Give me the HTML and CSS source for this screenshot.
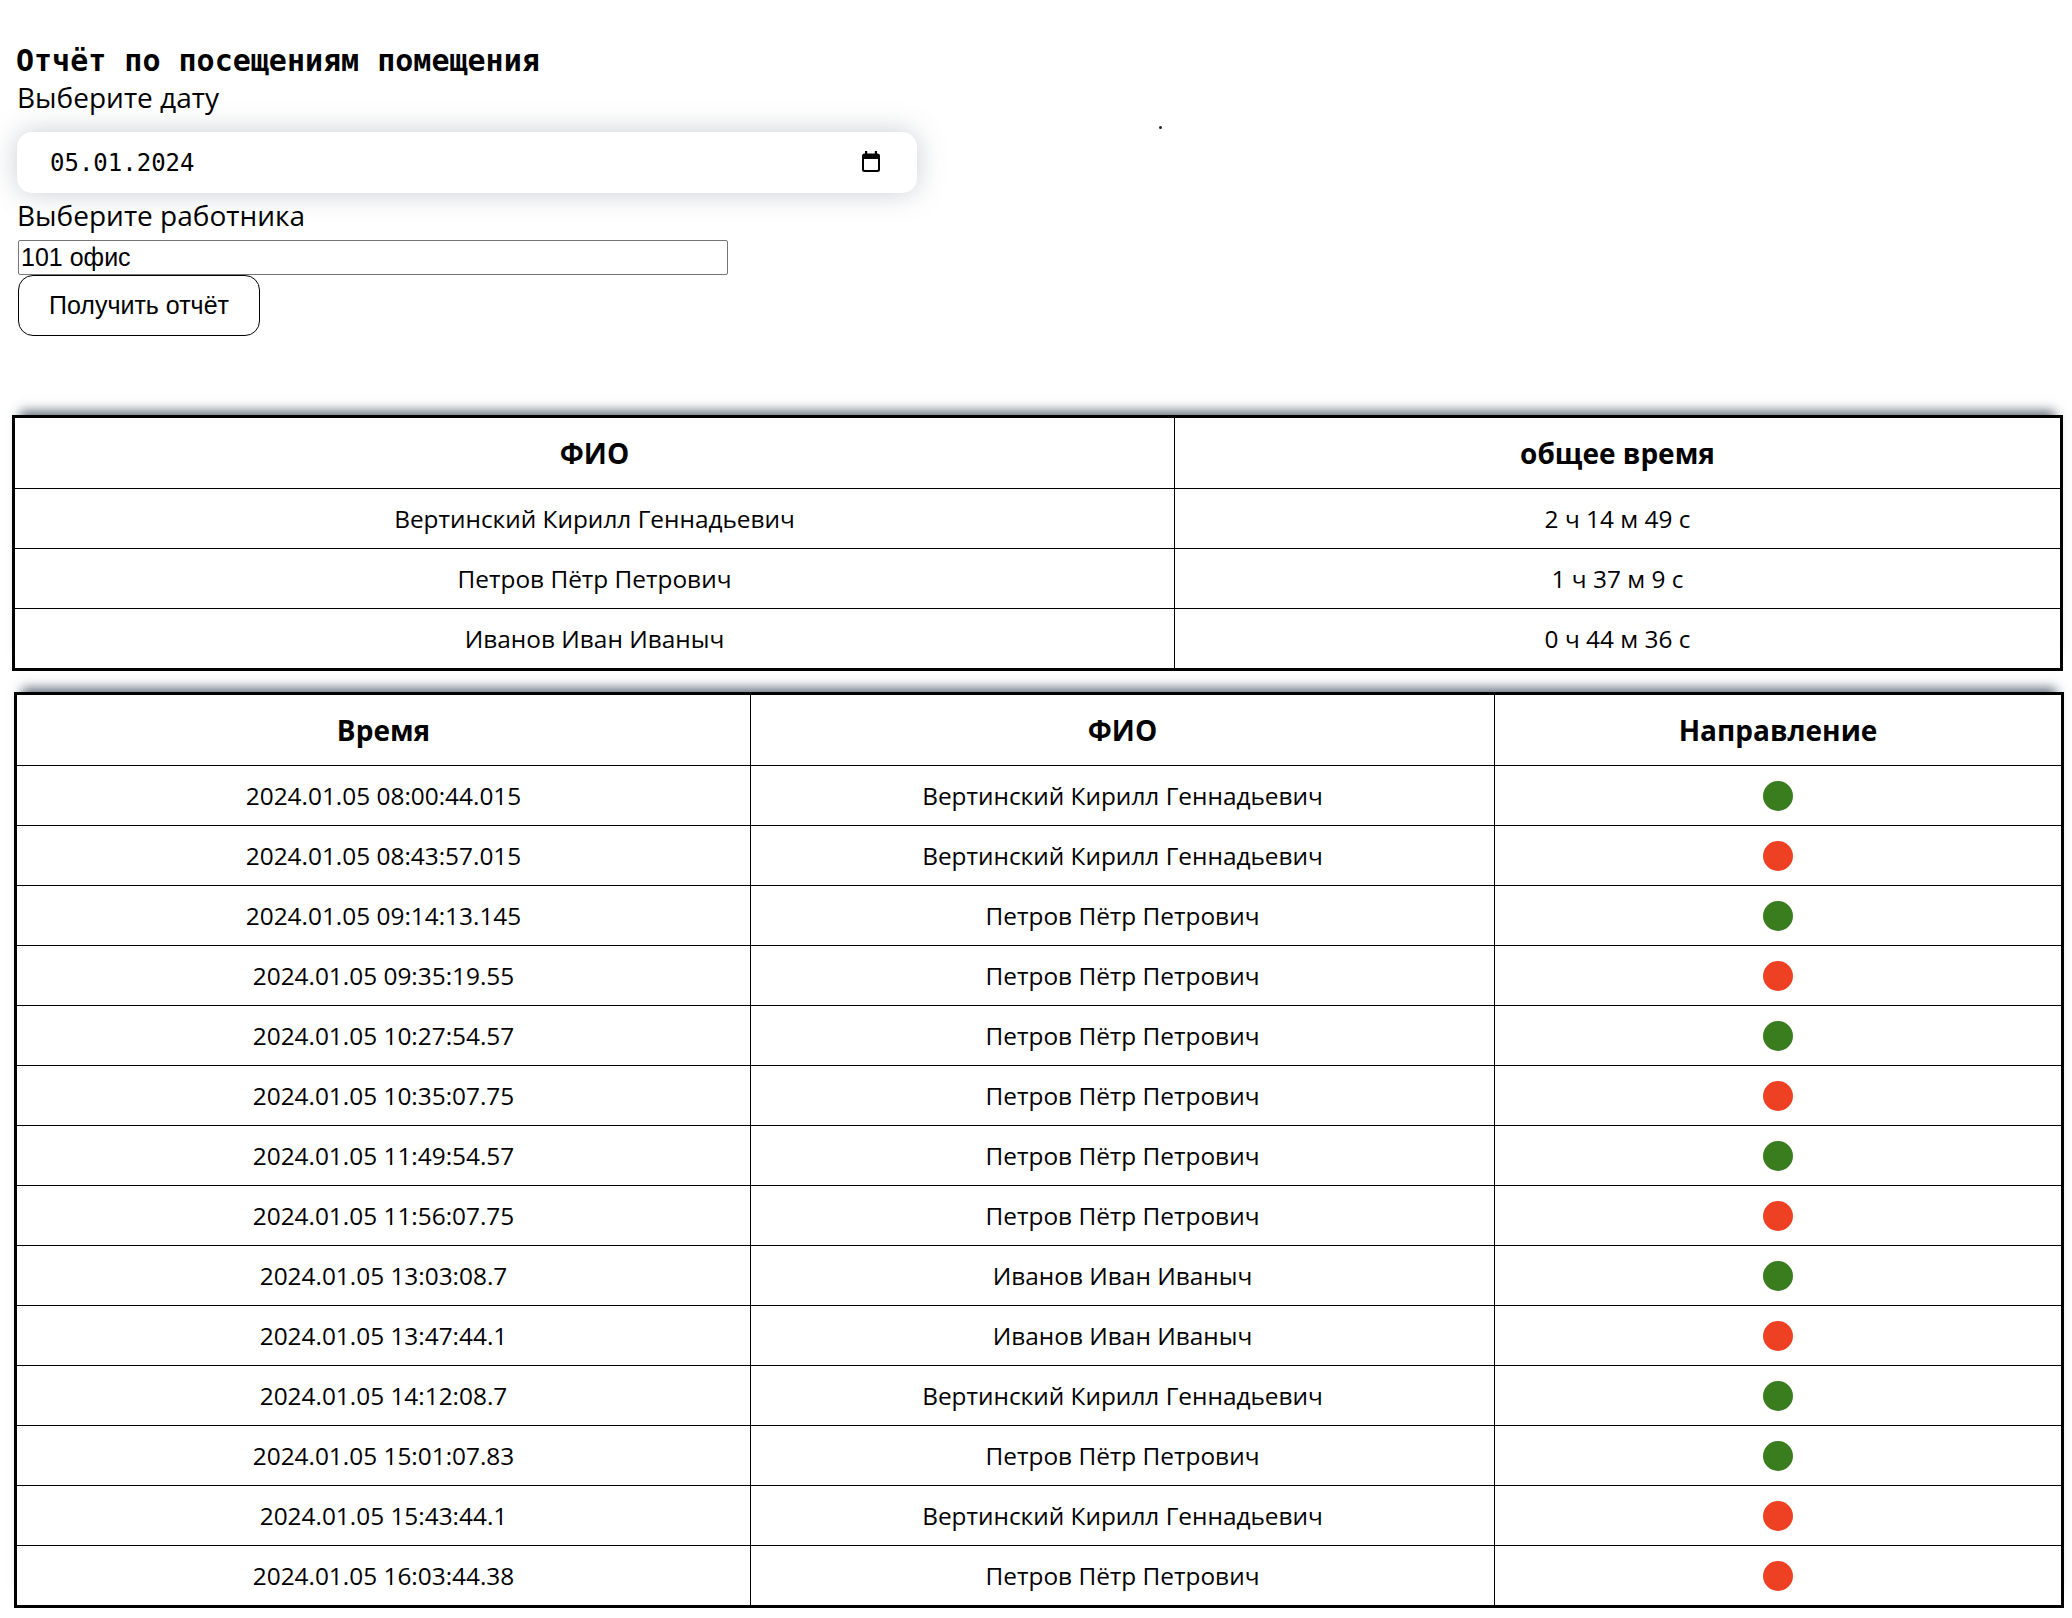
FILE: index.html
```html
<!DOCTYPE html>
<html lang="ru">
<head>
<meta charset="utf-8">
<title>Отчёт по посещениям помещения</title>
<link rel="stylesheet" href="styles.css">
</head>
<body>
<main class="page">
  <section class="form">
    <h1 class="title">Отчёт по посещениям помещения</h1>
    <label class="label label-date">Выберите дату</label>
    <div class="date-field">
      <span class="date-value">05.01.2024</span>
      <svg class="cal-icon" width="18" height="21" viewBox="0 0 18 21" aria-hidden="true">
        <rect x="3" y="0" width="2.2" height="4" fill="#000"/>
        <rect x="12.8" y="0" width="2.2" height="4" fill="#000"/>
        <path fill="#000" fill-rule="evenodd" d="M2.5 2.5h13a2.5 2.5 0 0 1 2.5 2.5v13.5a2.5 2.5 0 0 1-2.5 2.5h-13A2.5 2.5 0 0 1 0 18.5V5a2.5 2.5 0 0 1 2.5-2.5zM2 8v10.3c0 .4.3.7.7.7h12.6c.4 0 .7-.3.7-.7V8z"/>
      </svg>
    </div>
    <label class="label label-worker">Выберите работника</label>
    <input class="worker-input" type="text" value="101 офис">
    <button class="submit" type="button">Получить отчёт</button>
  </section>
  <span class="stray-dot"></span>

  <table class="report summary">
    <thead>
      <tr><th class="s-name">ФИО</th><th class="s-total">общее время</th></tr>
    </thead>
    <tbody>
      <tr><td>Вертинский Кирилл Геннадьевич</td><td>2 ч 14 м 49 с</td></tr>
      <tr><td>Петров Пётр Петрович</td><td>1 ч 37 м 9 с</td></tr>
      <tr><td>Иванов Иван Иваныч</td><td>0 ч 44 м 36 с</td></tr>
    </tbody>
  </table>

  <table class="report log">
    <thead>
      <tr><th class="l-time">Время</th><th class="l-name">ФИО</th><th class="l-dir">Направление</th></tr>
    </thead>
    <tbody>
      <tr><td>2024.01.05 08:00:44.015</td><td>Вертинский Кирилл Геннадьевич</td><td><span class="dot in"></span></td></tr>
      <tr><td>2024.01.05 08:43:57.015</td><td>Вертинский Кирилл Геннадьевич</td><td><span class="dot out"></span></td></tr>
      <tr><td>2024.01.05 09:14:13.145</td><td>Петров Пётр Петрович</td><td><span class="dot in"></span></td></tr>
      <tr><td>2024.01.05 09:35:19.55</td><td>Петров Пётр Петрович</td><td><span class="dot out"></span></td></tr>
      <tr><td>2024.01.05 10:27:54.57</td><td>Петров Пётр Петрович</td><td><span class="dot in"></span></td></tr>
      <tr><td>2024.01.05 10:35:07.75</td><td>Петров Пётр Петрович</td><td><span class="dot out"></span></td></tr>
      <tr><td>2024.01.05 11:49:54.57</td><td>Петров Пётр Петрович</td><td><span class="dot in"></span></td></tr>
      <tr><td>2024.01.05 11:56:07.75</td><td>Петров Пётр Петрович</td><td><span class="dot out"></span></td></tr>
      <tr><td>2024.01.05 13:03:08.7</td><td>Иванов Иван Иваныч</td><td><span class="dot in"></span></td></tr>
      <tr><td>2024.01.05 13:47:44.1</td><td>Иванов Иван Иваныч</td><td><span class="dot out"></span></td></tr>
      <tr><td>2024.01.05 14:12:08.7</td><td>Вертинский Кирилл Геннадьевич</td><td><span class="dot in"></span></td></tr>
      <tr><td>2024.01.05 15:01:07.83</td><td>Петров Пётр Петрович</td><td><span class="dot in"></span></td></tr>
      <tr><td>2024.01.05 15:43:44.1</td><td>Вертинский Кирилл Геннадьевич</td><td><span class="dot out"></span></td></tr>
      <tr><td>2024.01.05 16:03:44.38</td><td>Петров Пётр Петрович</td><td><span class="dot out"></span></td></tr>
    </tbody>
  </table>
</main>
</body>
</html>
```

FILE: styles.css
```css
html, body {
  margin: 0;
  padding: 0;
  background: #ffffff;
  color: #000000;
}

.page {
  position: relative;
  width: 2072px;
  padding-bottom: 10px;
}

.form {
  display: flex;
  flex-direction: column;
  align-items: flex-start;
  padding: 43px 0 0 17px;
}

.title {
  margin: 0 0 0 -1px;
  font-family: "DejaVu Sans Mono", monospace;
  font-weight: bold;
  font-size: 30px;
  line-height: 35px;
}

.label {
  font-family: "Open Sans", "Noto Sans", sans-serif;
  font-size: 28px;
  line-height: 38px;
}

.label-worker {
  margin-top: 3px;
}

.date-field {
  box-sizing: border-box;
  margin-top: 16px;
  width: 900px;
  height: 61px;
  padding: 0 37px 0 33px;
  border-radius: 15px;
  background: #ffffff;
  box-shadow: 0 0 28px rgba(95, 108, 125, 0.34);
  display: flex;
  align-items: center;
  justify-content: space-between;
}

.date-value {
  font-family: "DejaVu Sans Mono", monospace;
  font-size: 24px;
  line-height: 28px;
}

.cal-icon {
  display: block;
  margin-top: -3px;
}

.worker-input {
  box-sizing: border-box;
  margin: 6px 0 0 1px;
  width: 710px;
  height: 35px;
  padding: 0 2px;
  border: 1px solid #767676;
  border-radius: 2px;
  font-family: "Liberation Sans", Arial, sans-serif;
  font-size: 25px;
  color: #000;
  background: #fff;
}

.submit {
  box-sizing: border-box;
  margin-left: 1px;
  width: 242px;
  height: 61px;
  padding: 0;
  border: 1px solid #000;
  border-radius: 15px;
  background: #ffffff;
  font-family: "Liberation Sans", Arial, sans-serif;
  font-size: 25px;
  color: #000;
}

.stray-dot {
  position: absolute;
  left: 1159px;
  top: 126px;
  width: 3px;
  height: 3px;
  border-radius: 50%;
  background: #222;
}

.report {
  border-collapse: separate;
  border-spacing: 0;
  table-layout: fixed;
  border: 3px solid #000;
  background: #fff;
  box-shadow: 0 -12px 11px -8px rgba(45, 60, 78, 0.75);
  font-family: "Open Sans", "Noto Sans", sans-serif;
}

.report th,
.report td {
  padding: 0;
  text-align: center;
  vertical-align: middle;
  border-right: 1px solid #000;
  border-bottom: 1px solid #000;
}

.report th:last-child,
.report td:last-child {
  border-right: none;
}

.report tbody tr:last-child td {
  border-bottom: none;
}

.report th {
  height: 70px;
  font-size: 28px;
  font-weight: bold;
}

.report td {
  height: 59px;
  font-size: 24.4px;
}

.summary {
  margin: 79px 0 0 12px;
  width: 2051px;
}

.s-name { width: 1159px; }
.s-total { width: auto; }

.log {
  margin: 21px 0 0 14px;
  width: 2050px;
}

.l-time { width: 733px; }
.l-name { width: 743px; }
.l-dir { width: auto; }

.dot {
  display: block;
  margin: 0 auto;
  width: 30px;
  height: 30px;
  border-radius: 50%;
}

.dot.in { background: #3a7d1f; }
.dot.out { background: #ee4023; }
```
